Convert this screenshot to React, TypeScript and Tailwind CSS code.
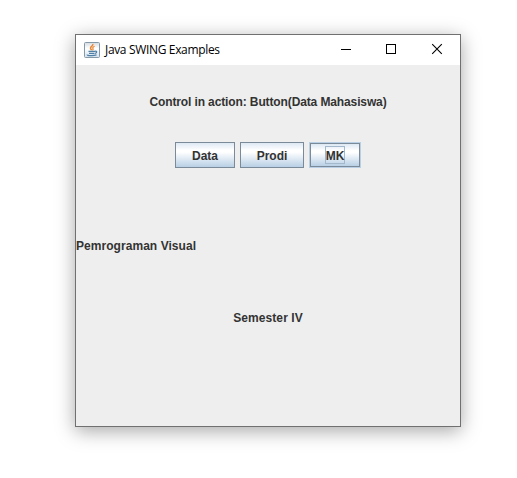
import React from 'react';

function JavaIcon() {
  return (
    <svg width="16" height="16" viewBox="0 0 16 16" className="shrink-0">
      <defs>
        <linearGradient id="cup-tile" x1="0" y1="0" x2="0" y2="1">
          <stop offset="0" stopColor="#d5dbe0" />
          <stop offset="0.4" stopColor="#ffffff" />
          <stop offset="1" stopColor="#d3e1ee" />
        </linearGradient>
      </defs>
      <rect x="0.5" y="0.5" width="15" height="15" rx="1" fill="url(#cup-tile)" stroke="#8498a8" />
      <path d="M8.8 2C9.5 4 6.2 4.6 6.5 6.3C6.6 7.2 7.5 7.6 7.7 8.3" fill="none" stroke="#e98532" strokeWidth="1.5" />
      <path d="M10.6 4.2C9 4.9 8.3 5.6 9 6.6C9.4 7.2 9 7.8 8.5 8.3" fill="none" stroke="#e98532" strokeWidth="1.2" />
      <path d="M4.5 9.3H11M5 11.3H10.5M11 9.3C13.4 8.7 13.2 10.9 11 11.4M3.2 12.6C2.8 13.8 9.5 14 12.5 12.9" fill="none" stroke="#4f7fa5" strokeWidth="1.2" />
    </svg>
  );
}

function TitleBar() {
  return (
    <header className="flex h-[30px] items-center bg-white pl-2">
      <JavaIcon />
      <span className="ml-[5px] whitespace-nowrap font-['Open_Sans','Noto_Sans',sans-serif] text-[12px] leading-[16px] tracking-[-0.34px] text-black">
        Java SWING Examples
      </span>
      <div className="-mr-px ml-auto flex h-full">
        <svg width="46" height="30" viewBox="0 0 46 30" shapeRendering="crispEdges">
          <path d="M18 14.5H28" stroke="#000" />
        </svg>
        <svg width="46" height="30" viewBox="0 0 46 30" shapeRendering="crispEdges">
          <rect x="17.5" y="9.5" width="9" height="9" fill="none" stroke="#000" />
        </svg>
        <svg width="46" height="30" viewBox="0 0 46 30">
          <path d="M17.2 9.2L26.8 18.8M26.8 9.2L17.2 18.8" stroke="#000" strokeWidth="1.1" />
        </svg>
      </div>
    </header>
  );
}

const face =
  'border border-[#7a8a99] bg-[linear-gradient(180deg,#dde8f3_0%,#ffffff_30%,#ffffff_38%,#b8cfe5_100%)] flex items-center justify-center';

export default function App() {
  return (
    <div className="h-[478px] w-[517px] overflow-hidden bg-white pl-[75px] pt-[34px]">
      <main className="h-[393px] w-[386px] border border-[#707070] bg-[#eeeeee] shadow-[0_4px_18px_0px_rgba(0,0,0,0.35)]">
        <TitleBar />
        <section className="grid grid-rows-[repeat(5,72px)] whitespace-nowrap font-['Liberation_Sans',Arial,sans-serif] text-[12px] font-bold leading-[16px] text-[#333333]">
          <div className="flex items-center justify-center pt-px">
            <span className="tracking-[-0.12px]">Control in action: Button(Data Mahasiswa)</span>
          </div>
          <div className="flex items-start justify-center gap-[5px] pt-[5px]">
            <button className={`${face} h-[26px] w-[60px] pt-[2px]`}>Data</button>
            <button className={`${face} h-[26px] w-16 pt-[2px]`}>Prodi</button>
            <div className="h-[26px] w-[52px] border border-[#b8cfe5]">
              <button className={`${face} h-6 w-[50px]`}>
                <span className="flex h-[18px] w-5 items-center justify-center border border-[#a3b8cc] pt-[2px]">MK</span>
              </button>
            </div>
          </div>
          <div className="flex items-center pt-px">
            <span className="tracking-[0.05px]">Pemrograman Visual</span>
          </div>
          <div className="flex items-center justify-center pt-px">
            <span className="tracking-[0.08px]">Semester IV</span>
          </div>
          <div />
        </section>
      </main>
    </div>
  );
}
